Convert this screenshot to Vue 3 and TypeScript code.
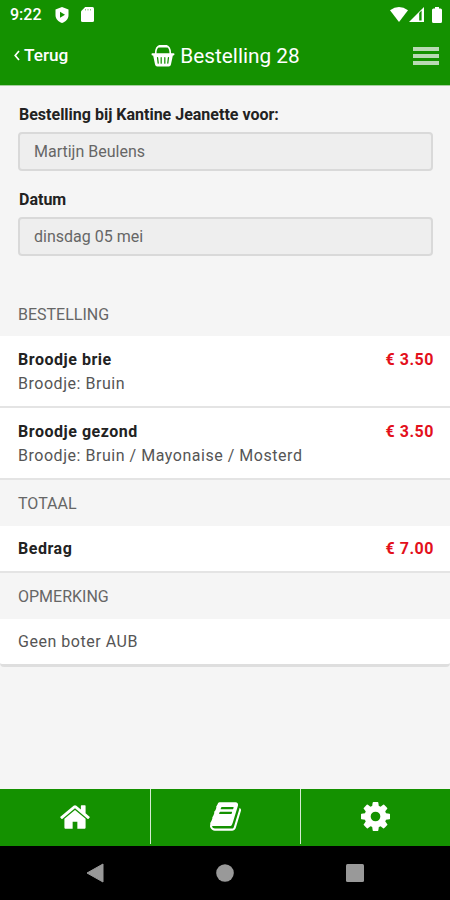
<script setup lang="ts">
interface OrderLine {
  name: string
  options: string
  price: string
}

const fields: { label: string; value: string; kind: string }[] = [
  { label: 'Bestelling bij Kantine Jeanette voor:', value: 'Martijn Beulens', kind: 'person' },
  { label: 'Datum', value: 'dinsdag 05 mei', kind: 'date' },
]

const lines: OrderLine[] = [
  { name: 'Broodje brie', options: 'Broodje: Bruin', price: '€ 3.50' },
  { name: 'Broodje gezond', options: 'Broodje: Bruin / Mayonaise / Mosterd', price: '€ 3.50' },
]
</script>

<template>
  <div class="screen">
    <header class="header">
      <div class="status">
        <span class="clock">9:22</span>
        <svg class="shield" width="14" height="16" viewBox="0 0 14 16">
          <path d="M7 0 13.500 2.500V8c0 4-2.800 6.700-6.500 8C3.300 14.700.5 12 .5 8V2.500Z" fill="#fff" />
          <path d="M5 4.800 10 7.800 5 10.800Z" fill="#149100" />
        </svg>
        <svg class="sdcard" width="13" height="15" viewBox="0 0 13 15">
          <path d="M4.200 0H11.500Q13 0 13 1.500V13.500Q13 15 11.500 15H1.500Q0 15 0 13.500V4.200Z" fill="#fff" />
          <path d="M4.500 2v1.500M7 2v1.500M9.500 2v1.500" stroke="#149100" stroke-width=".8" opacity=".6" />
        </svg>
        <span class="spacer"></span>
        <svg class="wifi" width="18" height="15" viewBox="0 0 18 15">
          <path d="M0 3.200Q9-3 18 3.200L9 15Z" fill="#fff" />
        </svg>
        <svg class="signal" width="15" height="15" viewBox="0 0 15 15">
          <path d="M0 15 15 0V15Z" fill="#fff" />
          <path d="M10.200 6V13.500H12.600V3.500Z" fill="#149100" />
        </svg>
        <svg class="battery" width="10" height="16" viewBox="0 0 10 16">
          <path d="M3 0H7V1.500H8.500Q10 1.500 10 3V14.500Q10 16 8.500 16H1.500Q0 16 0 14.500V3Q0 1.500 1.500 1.500H3Z" fill="#fff" />
        </svg>
      </div>
      <div class="bar">
        <div class="back">
          <svg width="6" height="11" viewBox="0 0 6 11">
            <path d="M5 1 1.200 5.500 5 10" fill="none" stroke="#fff" stroke-width="1.700" />
          </svg>
          <span>Terug</span>
        </div>
        <h1 class="title">
          <svg width="24" height="22" viewBox="0 0 24 23">
            <path d="M4.300 9.500C4.300 4 6 1.200 9 1.200H15C18 1.200 19.700 4 19.700 9.500" fill="none" stroke="#fff" stroke-width="1.700" />
            <path d="M8.500 1.400H15.500" stroke="#fff" stroke-width="2.600" stroke-linecap="round" />
            <path d="M1 8.600H23Q24 8.600 24 9.700T23 11H22.300L20.300 20.500Q19.900 22.500 18 22.500H6Q4.100 22.500 3.700 20.500L1.700 11H1Q0 11 0 9.700T1 8.600Z" fill="#fff" />
            <path d="M6.300 13.200 7 19M10.100 13.200V19M13.900 13.200V19M17.700 13.200 17 19" stroke="#149100" stroke-width="1.300" stroke-linecap="round" />
          </svg>
          <span>Bestelling 28</span>
        </h1>
        <div class="menu"><i></i><i></i><i></i></div>
      </div>
    </header>

    <main class="content">
      <section class="form">
        <div v-for="field in fields" :key="field.label" class="field">
          <div class="label">{{ field.label }}</div>
          <div class="input" :class="field.kind">{{ field.value }}</div>
        </div>
      </section>

      <section class="list">
        <h2 class="divider first">BESTELLING</h2>
        <div v-for="line in lines" :key="line.name" class="row order">
          <div class="desc">
            <div class="name">{{ line.name }}</div>
            <div class="options">{{ line.options }}</div>
          </div>
          <div class="price">{{ line.price }}</div>
        </div>
        <h2 class="divider total">TOTAAL</h2>
        <div class="row single">
          <div class="name">Bedrag</div>
          <div class="price">€ 7.00</div>
        </div>
        <h2 class="divider remark">OPMERKING</h2>
        <div class="row last">
          <div class="note">Geen boter AUB</div>
        </div>
      </section>
    </main>

    <nav class="tabs">
      <div class="tab">
        <svg width="30" height="24" viewBox="80 256 1632 1280">
          <path d="M1472 992v480q0 26-19 45t-45 19h-384v-384h-256v384h-384q-26 0-45-19t-19-45v-480q0-1 .5-3t.5-3l575-474 575 474q1 2 1 6zm223-69l-62 74q-8 9-21 11h-3q-13 0-21-7l-692-577-692 577q-12 8-24 7-13-2-21-11l-62-74q-8-10-7-23.500t11-21.500l719-599q32-26 76-26t76 26l244 204v-195q0-14 9-23t23-9h192q14 0 23 9t9 23v408l219 182q10 8 11 21.500t-7 23.500z" fill="#fff" />
        </svg>
      </div>
      <div class="tab">
        <svg width="31" height="29" viewBox="0 128 1664 1536">
          <path d="M1639 478q40 57 18 129l-275 906q-19 64-76.500 107.500t-122.500 43.500h-923q-77 0-148.500-53.500t-99.500-131.500q-24-67-2-127 0-4 3-27t4-37q1-8-3-21.500t-3-19.500q2-11 8-21t16.500-23.500 16.500-23.500q23-38 45-91.500t30-91.500q3-10 .5-30t-.5-28q3-11 17-28t17-23q21-36 42-92t25-90q1-9-2.500-32t.5-28q4-13 22-30.500t22-22.500q19-26 42.500-84.500t27.500-96.500q1-8-3-25.500t-2-26.500q2-8 9-18t18-23 17-21q8-12 16.500-30.500t15-35 16-36 19.500-32 26.500-23.500 36-11.500 47.500 5.500l-1 3q38-9 51-9h761q74 0 114 56t18 130l-274 906q-36 119-71.500 153.500t-128.500 34.500h-869q-27 0-38 15-11 16-1 43 24 70 144 70h923q29 0 56-15.500t35-41.500l300-987q7-22 5-57 38 15 59 43zm-1064 2q-4 13 2 22.500t20 9.500h608q13 0 25.500-9.500t16.500-22.500l21-64q4-13-2-22.500t-20-9.500h-608q-13 0-25.500 9.500t-16.500 22.500zm-83 256q-4 13 2 22.500t20 9.500h608q13 0 25.500-9.500t16.500-22.500l21-64q4-13-2-22.500t-20-9.500h-608q-13 0-25.500 9.500t-16.500 22.500z" fill="#fff" />
        </svg>
      </div>
      <div class="tab">
        <svg width="29" height="29" viewBox="0 0 1536 1536">
          <path d="M1024 768q0-106-75-181t-181-75-181 75-75 181 75 181 181 75 181-75 75-181zm512-109v222q0 12-8 23t-20 13l-185 28q-19 54-39 91 35 50 107 138 10 12 10 25t-9 23q-27 37-99 108t-94 71q-12 0-26-9l-138-108q-44 23-91 38-16 136-29 186-7 28-36 28H657q-14 0-24.500-8.500T621 1506l-28-184q-49-16-90-37l-141 107q-10 9-25 9-14 0-25-11-126-114-165-168-7-10-7-23 0-12 8-23 15-21 51-66.500t54-70.500q-27-50-41-99l-183-27q-13-2-21-12.500T1 877V655q0-12 8-23t19-13l186-28q14-46 39-92-40-57-107-138-10-12-10-24 0-10 9-23 26-36 98.500-107.500T338 135q13 0 26 10l138 107q44-23 91-38 16-136 29-186 7-28 36-28h222q14 0 24.500 8.500T916 30l28 184q49 16 90 37l142-107q9-9 24-9 13 0 25 10 129 119 165 170 7 8 7 22 0 12-8 23-15 21-51 66.500t-54 70.500q26 50 41 98l183 28q13 2 21 12.500t8 23.500z" fill="#fff" />
        </svg>
      </div>
    </nav>

    <footer class="system">
      <svg width="18" height="20" viewBox="0 0 18 20"><path d="M17 1V19L1 10Z" fill="#999" stroke="#999" stroke-linejoin="round" /></svg>
      <svg width="18" height="18" viewBox="0 0 18 18"><circle cx="9" cy="9" r="8.800" fill="#999" /></svg>
      <svg width="18" height="18" viewBox="0 0 18 18"><rect width="18" height="18" rx="1.500" fill="#999" /></svg>
    </footer>
  </div>
</template>

<style>
body {
  margin: 0;
}
</style>

<style scoped>
.screen {
  width: 450px;
  height: 900px;
  display: flex;
  flex-direction: column;
  overflow: hidden;
  background: #f5f5f5;
  font-family: Roboto, "Liberation Sans", sans-serif;
  color: #222;
}
svg {
  display: block;
  flex: none;
}
.header {
  height: 85px;
  flex: none;
  background: #149100;
  border-bottom: 1px solid #a5cf9e;
  color: #fff;
}
.status {
  height: 29px;
  display: flex;
  align-items: center;
  padding: 0 8px 0 10px;
  box-sizing: border-box;
}
.clock {
  width: 45px;
  font-size: 16px;
  font-weight: 500;
}
.sdcard {
  margin-left: 12px;
}
.spacer {
  flex: 1;
}
.wifi {
  margin-right: 1px;
}
.signal {
  margin-right: 8px;
}
.bar {
  height: 54px;
  display: grid;
  grid-template-columns: 100px 1fr 100px;
  align-items: center;
}
.back {
  display: flex;
  align-items: center;
  gap: 4px;
  padding: 0 0 2px 14px;
  font-size: 17.200px;
  font-weight: 500;
}
.title {
  margin: 0;
  display: flex;
  justify-content: center;
  align-items: center;
  gap: 5px;
  padding-left: 1px;
  font-size: 20.800px;
  font-weight: 400;
  white-space: nowrap;
}
.menu {
  justify-self: end;
  width: 26px;
  margin-right: 11px;
  display: grid;
  gap: 3px;
}
.menu i {
  height: 4px;
  background: #b9dab4;
}
.content {
  flex: 1;
}
.form {
  padding: 16px 17px 0 18px;
}
.field {
  height: 84.500px;
}
.label {
  height: 30px;
  padding-left: 1px;
  line-height: 26px;
  font-size: 16px;
  font-weight: 700;
}
.input {
  height: 39px;
  box-sizing: border-box;
  border: 2px solid #d9d9d9;
  border-radius: 4px;
  background: #eee;
  padding-left: 14px;
  line-height: 35px;
  font-size: 16px;
  color: #666;
}
.divider {
  margin: 0;
  height: 46px;
  padding-left: 18px;
  line-height: 47px;
  font-size: 16px;
  font-weight: 400;
  color: #666;
}
.divider.first {
  margin-top: 20px;
  height: 45px;
}
.row {
  display: flex;
  justify-content: space-between;
  box-sizing: border-box;
  padding: 12px 16px 0 18px;
  background: #fff;
  border-bottom: 2px solid #e4e4e4;
  font-size: 16px;
  line-height: 24px;
  letter-spacing: 0.530px;
}
.order {
  height: 72px;
}
.single {
  height: 46.500px;
  padding-top: 11px;
}
.last {
  height: 48px;
  padding-top: 11px;
  border-bottom: 3px solid #dedede;
  border-bottom-left-radius: 4px;
  border-bottom-right-radius: 4px;
}
.name,
.price {
  font-weight: 700;
}
.price {
  color: #e3101c;
}
.options,
.note {
  color: #555;
}
.tabs {
  height: 57px;
  flex: none;
  display: grid;
  grid-template-columns: repeat(3, 1fr);
  background: #149100;
}
.tab {
  display: flex;
  align-items: center;
  justify-content: center;
  height: 55px;
}
.tab + .tab {
  border-left: 1px solid #d5ebd1;
}
.system {
  height: 54px;
  flex: none;
  display: grid;
  grid-template-columns: 1fr 1fr 1fr;
  justify-items: center;
  align-items: center;
  padding: 0 30px;
  background: #000;
}
</style>
